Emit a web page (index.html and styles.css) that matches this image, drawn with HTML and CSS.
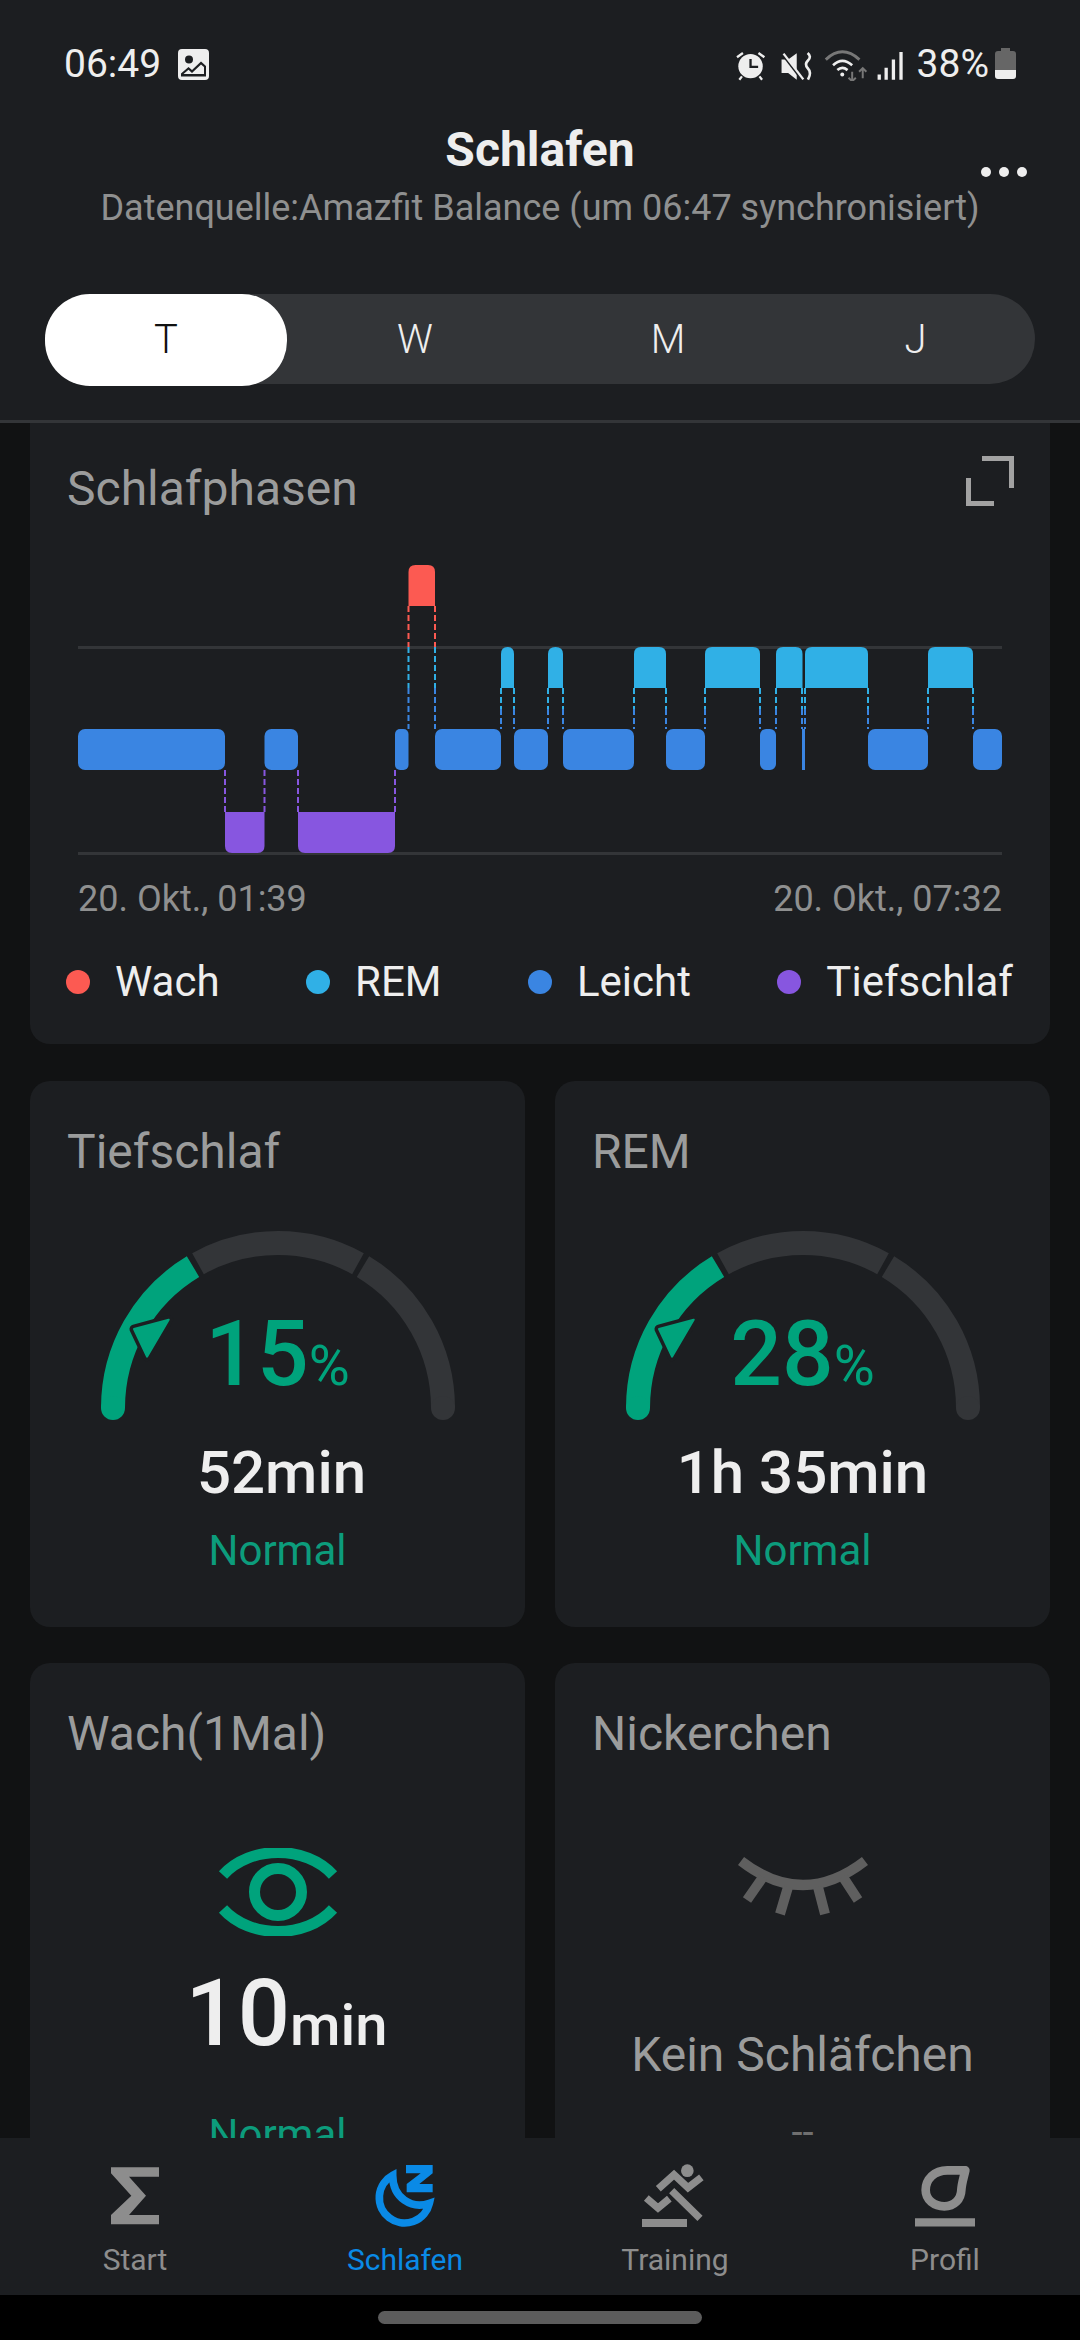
FILE: index.html
```html
<!DOCTYPE html>
<html lang="de">
<head>
<meta charset="utf-8">
<title>Schlafen</title>
<link rel="stylesheet" href="styles.css">
</head>
<body>
<div class="phone">
  <header class="top">
    <div class="status">
      <div class="status-left">
        <span class="clock">06:49</span>
        <svg class="pic" viewBox="0 0 31 31"><path fill="#eee" fill-rule="evenodd" d="M4 0H27A4 4 0 0 1 31 4V27A4 4 0 0 1 27 31H4A4 4 0 0 1 0 27V4A4 4 0 0 1 4 0ZM11 6.500A4 4 0 1 0 11 14.500A4 4 0 1 0 11 6.500ZM3 24.500V27.500H28V17L23 12.500L14 21L10.500 18Z"/><path fill="#eee" d="M5.500 25L10.500 20.800L14 24L23 15.500L26 18V25Z" /></svg>
      </div>
      <div class="status-right">
        <svg class="sys" viewBox="95 80 515 100">
          <circle cx="142" cy="135" r="37" fill="#eee"/>
          <path d="M142 113V137H165" fill="none" stroke="#1c1e21" stroke-width="7"/>
          <path d="M101 108L119 95M184 108L166 95M108 176L116 166M177 176L169 166" stroke="#eee" stroke-width="7" fill="none"/>
          <path d="M236 115H256L282 96V176L256 156H236Z" fill="#eee"/>
          <path d="M238 97L298 175" stroke="#1c1e21" stroke-width="9"/>
          <path d="M242 97L302 175" stroke="#eee" stroke-width="7"/>
          <path d="M315 95Q328 106 316 118Q304 130 316 142Q328 154 316 176" fill="none" stroke="#eee" stroke-width="8"/>
          <path d="M370 115Q420 68 472 115" fill="none" stroke="#777" stroke-width="9"/>
          <path d="M392 132Q420 106 450 132M405 147Q420 134 436 147" fill="none" stroke="#eee" stroke-width="8"/>
          <circle cx="420" cy="160" r="6" fill="#eee"/>
          <path d="M450 152V180M439 170L450 181L461 170M482 172V142M471 152L482 141L493 152" fill="none" stroke="#777" stroke-width="6"/>
          <path d="M532 160V176M553 140V176M575 115V176M598 92V176" stroke="#eee" stroke-width="10" fill="none"/>
        </svg>
        <span class="batt-text">38%</span>
        <svg class="batt" viewBox="0 0 21 31"><path fill="#666" d="M6 0H15V3H18A3 3 0 0 1 21 6V22H0V6A3 3 0 0 1 3 3H6Z"/><path fill="#eee" d="M0 22H21V28A3 3 0 0 1 18 31H3A3 3 0 0 1 0 28Z"/></svg>
      </div>
    </div>
    <div class="head-text">
      <h1 class="title">Schlafen</h1>
      <p class="source">Datenquelle:Amazfit Balance (um 06:47 synchronisiert)</p>
      <div class="more"><i></i><i></i><i></i></div>
    </div>
    <div class="tabs">
      <span class="tab active">T</span>
      <span class="tab">W</span>
      <span class="tab">M</span>
      <span class="tab tab-last">J</span>
    </div>
  </header>

  <main class="scroll">
    <section class="card chart-card">
      <div class="card-head">
        <h2 class="card-title">Schlafphasen</h2>
        <svg class="expand" viewBox="0 0 48 50"><path d="M16 2.500H45.500V32M2.500 22V47.500H28" fill="none" stroke="#a2a2a2" stroke-width="5"/></svg>
      </div>
      <svg class="stages" viewBox="0 0 1080 310">
        <g transform="translate(0 -555)">
          <path d="M78 647.500H1002M78 853.500H1002" stroke="#333538" stroke-width="3"/>
          <g stroke-width="2" stroke-dasharray="6 3" fill="none">
            <path d="M408.500 606V647M435 606V647" stroke="#fc5a52"/>
            <path d="M408.500 647V688M435 647V688" stroke="#30b0e6"/>
            <path d="M408.500 688V729M435 688V729" stroke="#3a85e2"/>
            <path stroke="#30b0e6" d="M501 688V709M514 688V709M548 688V709M563 688V709M634 688V709M666 688V709M705 688V709M760 688V709M776 688V709M802 688V709M805 688V709M868 688V709M928 688V709M973 688V709"/>
            <path stroke="#3a85e2" d="M501 709V729M514 709V729M548 709V729M563 709V729M634 709V729M666 709V729M705 709V729M760 709V729M776 709V729M802 709V729M805 709V729M868 709V729M928 709V729M973 709V729"/>
            <path stroke="#8756e0" d="M225 770V812M264.500 770V812M298 770V812M395 770V812"/>
          </g>
          <path fill="#fc5a52" d="M408.500 606V572Q408.500 565 415.500 565H428Q435 565 435 572V606Z"/>
          <g fill="#30b0e6">
            <path d="M501 688V654Q501 647 507.500 647Q514 647 514 654V688Z"/>
            <path d="M548 688V654Q548 647 555.500 647Q563 647 563 654V688Z"/>
            <path d="M634 688V654Q634 647 641 647H659Q666 647 666 654V688Z"/>
            <path d="M705 688V654Q705 647 712 647H753Q760 647 760 654V688Z"/>
            <path d="M776 688V654Q776 647 783 647H795.500Q802.500 647 802.500 654V688Z"/>
            <path d="M805 688V654Q805 647 812 647H861Q868 647 868 654V688Z"/>
            <path d="M928 688V654Q928 647 935 647H966Q973 647 973 654V688Z"/>
          </g>
          <g fill="#3a85e2">
            <rect x="78" y="729" width="147" height="41" rx="7"/>
            <rect x="264.500" y="729" width="33.500" height="41" rx="7"/>
            <rect x="395" y="729" width="13.500" height="41" rx="5"/>
            <rect x="435" y="729" width="66" height="41" rx="7"/>
            <rect x="514" y="729" width="34" height="41" rx="7"/>
            <rect x="563" y="729" width="71" height="41" rx="7"/>
            <rect x="666" y="729" width="39" height="41" rx="7"/>
            <rect x="760" y="729" width="16" height="41" rx="6"/>
            <rect x="802" y="729" width="3" height="41"/>
            <rect x="868" y="729" width="60" height="41" rx="7"/>
            <rect x="973" y="729" width="29" height="41" rx="7"/>
          </g>
          <g fill="#8756e0">
            <path d="M225 812H264.500V846Q264.500 853 257.500 853H232Q225 853 225 846Z"/>
            <path d="M298 812H395V846Q395 853 388 853H305Q298 853 298 846Z"/>
          </g>
        </g>
      </svg>
      <div class="range"><span>20. Okt., 01:39</span><span>20. Okt., 07:32</span></div>
      <ul class="legend">
        <li class="legend-item"><i class="dot wake"></i>Wach</li>
        <li class="legend-item"><i class="dot rem"></i>REM</li>
        <li class="legend-item"><i class="dot light"></i>Leicht</li>
        <li class="legend-item"><i class="dot deep"></i>Tiefschlaf</li>
      </ul>
    </section>

    <div class="grid">
      <section class="card stat">
        <h2 class="card-title">Tiefschlaf</h2>
        <div class="gauge">
          <svg class="gauge-svg" viewBox="0 0 380 200">
            <g fill="none" stroke-width="24">
              <path d="M110 38.700A165 165 0 0 1 270 38.700" stroke="#333538"/>
              <path d="M275 41.600A165 165 0 0 1 355 183" stroke="#333538"/>
              <path d="M25 183A165 165 0 0 1 105 41.600" stroke="#00a37c"/>
            </g>
            <circle cx="355" cy="183" r="12" fill="#333538"/>
            <circle cx="25" cy="183" r="12" fill="#00a37c"/>
            <path d="M80.700 94.700L46 104L59 131.700Z" fill="#00a37c" stroke="#1c1e21" stroke-width="9" stroke-linejoin="round"/>
            <path d="M80.700 94.700L46 104L59 131.700Z" fill="#00a37c" stroke="#00a37c" stroke-width="2" stroke-linejoin="round"/>
          </svg>
          <div class="pct">15<small>%</small></div>
        </div>
        <div class="dur dur-short">52min</div>
        <div class="state">Normal</div>
      </section>

      <section class="card stat">
        <h2 class="card-title">REM</h2>
        <div class="gauge">
          <svg class="gauge-svg" viewBox="0 0 380 200">
            <g fill="none" stroke-width="24">
              <path d="M110 38.700A165 165 0 0 1 270 38.700" stroke="#333538"/>
              <path d="M275 41.600A165 165 0 0 1 355 183" stroke="#333538"/>
              <path d="M25 183A165 165 0 0 1 105 41.600" stroke="#00a37c"/>
            </g>
            <circle cx="355" cy="183" r="12" fill="#333538"/>
            <circle cx="25" cy="183" r="12" fill="#00a37c"/>
            <path d="M80.700 94.700L46 104L59 131.700Z" fill="#00a37c" stroke="#1c1e21" stroke-width="9" stroke-linejoin="round"/>
            <path d="M80.700 94.700L46 104L59 131.700Z" fill="#00a37c" stroke="#00a37c" stroke-width="2" stroke-linejoin="round"/>
          </svg>
          <div class="pct">28<small>%</small></div>
        </div>
        <div class="dur">1h 35min</div>
        <div class="state">Normal</div>
      </section>

      <section class="card stat">
        <h2 class="card-title">Wach(1Mal)</h2>
        <svg class="eye" viewBox="0 0 120 88">
          <path d="M5 27C32 -3 88 -3 115 27M5 61C32 91 88 91 115 61" fill="none" stroke="#00a37c" stroke-width="11"/>
          <ellipse cx="60" cy="44" rx="23.500" ry="23.500" fill="none" stroke="#00a37c" stroke-width="11"/>
        </svg>
        <div class="big"><span>10</span><small>min</small></div>
        <div class="state state-wake">Normal</div>
      </section>

      <section class="card stat">
        <h2 class="card-title">Nickerchen</h2>
        <svg class="lash" viewBox="0 0 130 60">
          <path d="M3 4Q65 52 127 4" fill="none" stroke="#5f5f5f" stroke-width="10"/>
          <path d="M25 20L9 43M50 30L42 57M80 30L87 57M105 20L120 43" fill="none" stroke="#5f5f5f" stroke-width="10"/>
        </svg>
        <div class="no-nap">Kein Schläfchen</div>
        <div class="dash">--</div>
      </section>
    </div>
  </main>

  <nav class="nav">
    <a class="nav-item">
      <svg class="nav-icon" viewBox="105 69 240 198"><path fill="#8d8d8d" d="M153 82H297V110H207L258 167L207 225H297V253H153V225L214 167L153 100Z"/></svg>
      <span>Start</span>
    </a>
    <a class="nav-item on">
      <svg class="nav-icon" viewBox="915 69 240 198">
        <path fill="none" stroke="#0a8ae6" stroke-width="23" d="M998 106A76 76 0 1 0 1108 190C1055 208 998 175 998 106Z"/>
        <path fill="#0a8ae6" d="M1038 75H1118V100L1078 132H1118V157H1040V132L1082 100H1038Z"/>
      </svg>
      <span>Schlafen</span>
    </a>
    <a class="nav-item">
      <svg class="nav-icon" viewBox="105 69 240 198">
        <circle cx="262" cy="92" r="19" fill="#8d8d8d"/>
        <path d="M126 249H261" stroke="#8d8d8d" stroke-width="24"/>
        <path d="M175 146L222 104L264 143L304 112M215 152L300 235M139 174L174 204L208 176" fill="none" stroke="#8d8d8d" stroke-width="22"/>
      </svg>
      <span>Training</span>
    </a>
    <a class="nav-item">
      <svg class="nav-icon" viewBox="915 69 240 198">
        <path fill="none" stroke="#8d8d8d" stroke-width="26" stroke-linejoin="round" d="M1096 91H1042C1003 91 977 118 977 150C977 180 1003 199 1033 199C1063 199 1083 178 1084 150C1085 130 1092 110 1096 91Z"/>
        <path d="M945 247H1125" stroke="#8d8d8d" stroke-width="25"/>
      </svg>
      <span>Profil</span>
    </a>
  </nav>
  <div class="home"><div class="home-pill"></div></div>
</div>
</body>
</html>
```

FILE: styles.css
```css
* { box-sizing: border-box; }
html, body { margin: 0; padding: 0; background: #000; }
body { font-family: Roboto, "Noto Sans", sans-serif; }
h1, h2, p, ul { margin: 0; padding: 0; list-style: none; font-weight: 400; }

.phone {
  width: 1080px;
  height: 2340px;
  display: flex;
  flex-direction: column;
  overflow: hidden;
  background: #111213;
}

/* header */
.top {
  flex: none;
  height: 423px;
  background: #1c1e21;
  border-bottom: 3px solid #333538;
}
.status {
  height: 98px;
  padding: 44px 64px 0 64px;
  display: flex;
  justify-content: space-between;
  color: #eee;
}
.status-left, .status-right { display: flex; align-items: flex-start; }
.clock { font-size: 39px; line-height: 40px; margin-right: 17px; }
.pic { width: 31px; height: 31px; margin-top: 5px; }
.sys { width: 172px; height: 33px; margin: 4px 11px 0 0; }
.batt-text { font-size: 39px; line-height: 40px; }
.batt { width: 21px; height: 31px; margin: 4px 0 0 6px; }

.head-text { position: relative; text-align: center; }
.title {
  font-size: 48px;
  font-weight: 700;
  line-height: 52px;
  color: #eee;
  padding-top: 26px;
}
.source {
  font-size: 36px;
  line-height: 44px;
  color: #8f9090;
  margin-top: 10px;
}
.more {
  position: absolute;
  right: 53px;
  top: 69px;
  display: flex;
  gap: 8px;
}
.more i { width: 10px; height: 10px; border-radius: 50%; background: #eee; }

.tabs {
  margin: 64px 45px 0;
  height: 90px;
  border-radius: 45px;
  background: #333538;
  display: grid;
  grid-template-columns: 242px 256px 250px 242px;
}
.tab {
  font-size: 40px;
  font-weight: 300;
  line-height: 92px;
  text-align: center;
  color: #eee;
}
.tab-last { padding-left: 3px; }
.tab.active { background: #fff; color: #111; border-radius: 45px; }

/* scrolling content */
.scroll {
  flex: 1;
  min-height: 0;
  overflow: hidden;
  padding: 0 30px;
}
.card {
  background: #1c1e21;
  border-radius: 20px;
}
.card-title {
  font-size: 48px;
  line-height: 56px;
  color: #9b9c9c;
}
.chart-card {
  margin-top: -20px;
  height: 641px;
  padding: 58px 36px 0 37px;
}
.card-head { display: flex; justify-content: space-between; align-items: flex-start; }
.expand { width: 48px; height: 50px; margin-top: -5px; }
.stages { display: block; width: 1080px; height: 310px; margin: 38px 0 0 -67px; }
.range {
  display: flex;
  justify-content: space-between;
  font-size: 36px;
  line-height: 40px;
  color: #8f9090;
  margin: 14px 12px 0 11px;
}
.legend {
  display: flex;
  justify-content: space-between;
  margin: 39px 1px 0 -1px;
}
.legend-item {
  display: flex;
  align-items: center;
  gap: 25px;
  font-size: 42px;
  line-height: 48px;
  color: #eee;
}
.dot { width: 24px; height: 24px; border-radius: 50%; }
.dot.wake { background: #fc5a52; }
.dot.rem { background: #30b0e6; }
.dot.light { background: #3a85e2; }
.dot.deep { background: #8756e0; }

.grid {
  display: grid;
  grid-template-columns: 495px 495px;
  column-gap: 30px;
  row-gap: 36px;
  margin-top: 37px;
}
.stat {
  height: 546px;
  padding: 43px 0 0;
  text-align: center;
}
.stat .card-title { text-align: left; padding-left: 37px; }

.gauge {
  position: relative;
  width: 380px;
  height: 200px;
  margin: 45px auto 0;
}
.gauge-svg { display: block; width: 380px; height: 200px; }
.pct {
  position: absolute;
  left: 0;
  right: 0;
  top: 76px;
  font-size: 91px;
  line-height: 106px;
  font-weight: 500;
  color: #00a37c;
  text-align: center;
}
.pct small { font-size: 56px; font-weight: 400; }
.dur {
  font-size: 60px;
  line-height: 68px;
  font-weight: 500;
  color: #eee;
  margin-top: 14px;
}
.dur-short { padding-left: 8px; }
.state {
  font-size: 42px;
  line-height: 48px;
  color: #0c9c7c;
  margin-top: 20px;
}

.eye { display: block; width: 120px; height: 88px; margin: 86px auto 0; }
.big { color: #eee; font-weight: 500; line-height: 108px; font-size: 92px; margin-top: 24px; padding-left: 18px; }
.big small { font-size: 58px; }
.state-wake { margin-top: 32px; }
.lash { display: block; width: 130px; height: 60px; margin: 95px auto 0; }
.no-nap { font-size: 48px; line-height: 56px; color: #9b9c9c; margin-top: 110px; }
.dash { font-size: 40px; line-height: 48px; color: #6f6f6f; margin-top: 26px; }

/* bottom nav */
.nav {
  flex: none;
  height: 157px;
  background: #1c1e21;
  display: grid;
  grid-template-columns: repeat(4, 270px);
  padding-top: 25px;
}
.nav-item {
  display: flex;
  flex-direction: column;
  align-items: center;
  color: #8d8d8d;
  font-size: 30px;
  line-height: 34px;
}
.nav-item.on { color: #0a8ae6; }
.nav-icon { width: 80px; height: 66px; display: block; margin-bottom: 14px; }

.home {
  flex: none;
  height: 45px;
  background: #000;
  padding-top: 16px;
}
.home-pill {
  width: 324px;
  height: 13px;
  margin: 0 auto;
  border-radius: 7px;
  background: #5c5c5c;
}
```
